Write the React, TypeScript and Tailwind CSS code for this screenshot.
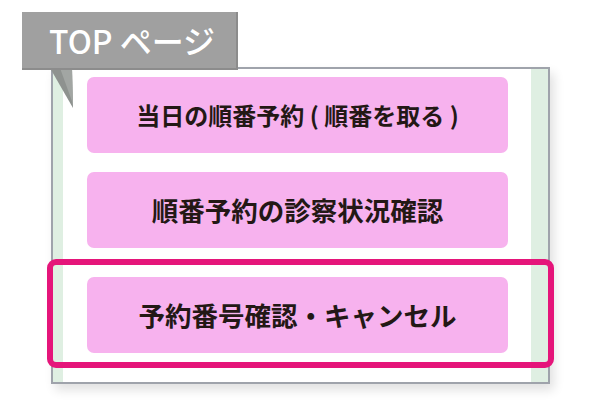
const MENU = [
  { label: "当日の順番予約 ( 順番を取る )", size: "text-[24px]" },
  { label: "順番予約の診察状況確認", size: "text-[26.5px]" },
  { label: "予約番号確認・キャンセル", size: "text-[26.5px]" },
];

export default function App() {
  return (
    <div className="w-[600px] h-[400px] bg-white relative overflow-hidden font-['Noto_Sans_CJK_JP',sans-serif]">
      {/* panel */}
      <div className="absolute left-[51px] top-[67px] w-[499px] h-[317px] border-2 border-[#9fa3ab] bg-white shadow-[4px_6px_10px_rgba(0,0,0,0.12)] flex">
        <div className="w-[10px] bg-[#dfefe2]" />
        <div className="flex-1 flex flex-col pt-[8px] pl-[24px] pr-[23px]">
          {MENU.map((m, i) => (
            <div
              key={m.label}
              className={`h-[76px] rounded-[7px] bg-[#f7b2ee] flex items-center justify-center font-bold text-[#231815] ${m.size} ${
                i === 1 ? "mt-[19px]" : i === 2 ? "mt-[29px]" : ""
              }`}
            >
              {m.label}
            </div>
          ))}
        </div>
        <div className="w-[17px] bg-[#dfefe2]" />
      </div>

      {/* highlight */}
      <div className="absolute left-[47px] top-[259px] w-[507px] h-[109px] border-[6px] border-[#e5157a] rounded-[9px]" />

      {/* tab label */}
      <svg className="absolute left-0 top-0" width="120" height="120" viewBox="0 0 120 120">
        <polygon points="50,68 72,68 73,108" fill="#8e928f" />
        <polygon points="60,68 72,68 73,104" fill="#a2a6a3" />
      </svg>
      <div className="absolute left-[22px] top-[12px] w-[216px] h-[58px] bg-[#a0a0a0] border-r-2 border-b-2 border-[#8c8c8c] flex items-center pl-[27px] text-white text-[32px] font-medium leading-none">
        TOP ページ
      </div>
    </div>
  );
}
